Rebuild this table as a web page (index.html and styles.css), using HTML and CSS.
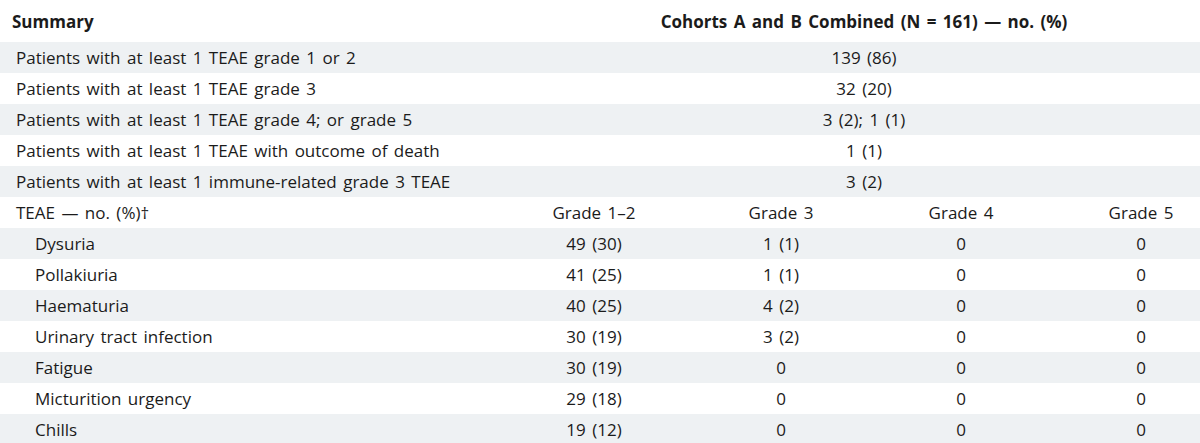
FILE: index.html
```html
<!DOCTYPE html>
<html lang="en">
<head>
<meta charset="utf-8">
<title>TEAE Summary</title>
<link rel="stylesheet" href="styles.css">
</head>
<body>
<table class="ae-table">
  <colgroup>
    <col class="c-label">
    <col class="c-g12">
    <col class="c-g">
    <col class="c-g">
    <col class="c-g">
  </colgroup>
  <thead>
    <tr class="head-row">
      <th class="lbl-head">Summary</th>
      <th class="val-head" colspan="4">Cohorts A and B Combined (N = 161) — no. (%)</th>
    </tr>
  </thead>
  <tbody>
    <tr class="shade"><td class="lbl">Patients with at least 1 TEAE grade 1 or 2</td><td class="val" colspan="4">139 (86)</td></tr>
    <tr><td class="lbl">Patients with at least 1 TEAE grade 3</td><td class="val" colspan="4">32 (20)</td></tr>
    <tr class="shade"><td class="lbl">Patients with at least 1 TEAE grade 4; or grade 5</td><td class="val" colspan="4">3 (2); 1 (1)</td></tr>
    <tr><td class="lbl">Patients with at least 1 TEAE with outcome of death</td><td class="val" colspan="4">1 (1)</td></tr>
    <tr class="shade"><td class="lbl">Patients with at least 1 immune-related grade 3 TEAE</td><td class="val" colspan="4">3 (2)</td></tr>
    <tr><td class="lbl">TEAE — no. (%)†</td><td class="val">Grade 1–2</td><td class="val">Grade 3</td><td class="val">Grade 4</td><td class="val">Grade 5</td></tr>
    <tr class="shade"><td class="lbl sub">Dysuria</td><td class="val">49 (30)</td><td class="val">1 (1)</td><td class="val">0</td><td class="val">0</td></tr>
    <tr><td class="lbl sub">Pollakiuria</td><td class="val">41 (25)</td><td class="val">1 (1)</td><td class="val">0</td><td class="val">0</td></tr>
    <tr class="shade"><td class="lbl sub">Haematuria</td><td class="val">40 (25)</td><td class="val">4 (2)</td><td class="val">0</td><td class="val">0</td></tr>
    <tr><td class="lbl sub">Urinary tract infection</td><td class="val">30 (19)</td><td class="val">3 (2)</td><td class="val">0</td><td class="val">0</td></tr>
    <tr class="shade"><td class="lbl sub">Fatigue</td><td class="val">30 (19)</td><td class="val">0</td><td class="val">0</td><td class="val">0</td></tr>
    <tr><td class="lbl sub">Micturition urgency</td><td class="val">29 (18)</td><td class="val">0</td><td class="val">0</td><td class="val">0</td></tr>
    <tr class="shade"><td class="lbl sub">Chills</td><td class="val">19 (12)</td><td class="val">0</td><td class="val">0</td><td class="val">0</td></tr>
  </tbody>
</table>
</body>
</html>
```
FILE: styles.css
```css
html, body {
  margin: 0;
  padding: 0;
  background: #ffffff;
  overflow: hidden;
}

.ae-table {
  width: 1231px;
  table-layout: fixed;
  border-collapse: collapse;
  font-family: "Open Sans", Lato, sans-serif;
  font-size: 17px;
  word-spacing: 2px;
  color: #1b1b1b;
}

.c-label { width: 497px; }
.c-g12 { width: 194px; }
.c-g { width: 180px; }

.head-row th {
  height: 42px;
  font-weight: 700;
  vertical-align: middle;
  padding: 0;
}

.lbl-head {
  text-align: left;
  padding-left: 12px !important;
}

.val-head {
  text-align: center;
}

tbody tr {
  height: 31px;
}

tbody td {
  padding: 0;
  vertical-align: middle;
  white-space: nowrap;
}

.shade {
  background: #eef1f3;
}

.lbl {
  text-align: left;
  padding-left: 16px;
}

.lbl.sub {
  padding-left: 35px;
}

.val {
  text-align: center;
}
```
